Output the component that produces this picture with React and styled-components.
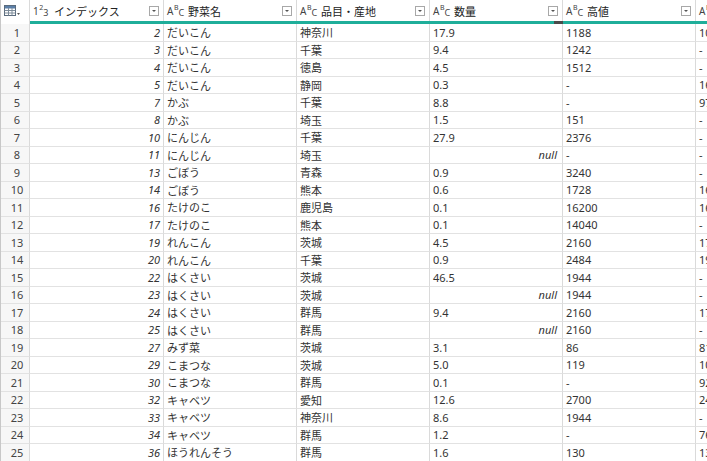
import React from 'react'
import styled, { createGlobalStyle } from 'styled-components'

const rows = [
  [2, 'だいこん', '神奈川', '17.9', '1188', '10'],
  [3, 'だいこん', '千葉', '9.4', '1242', '-'],
  [4, 'だいこん', '徳島', '4.5', '1512', '-'],
  [5, 'だいこん', '静岡', '0.3', '-', '16'],
  [7, 'かぶ', '千葉', '8.8', '-', '97'],
  [8, 'かぶ', '埼玉', '1.5', '151', '-'],
  [10, 'にんじん', '千葉', '27.9', '2376', '-'],
  [11, 'にんじん', '埼玉', null, '-', '-'],
  [13, 'ごぼう', '青森', '0.9', '3240', '-'],
  [14, 'ごぼう', '熊本', '0.6', '1728', '16'],
  [16, 'たけのこ', '鹿児島', '0.1', '16200', '16'],
  [17, 'たけのこ', '熊本', '0.1', '14040', '-'],
  [19, 'れんこん', '茨城', '4.5', '2160', '17'],
  [20, 'れんこん', '千葉', '0.9', '2484', '19'],
  [22, 'はくさい', '茨城', '46.5', '1944', '-'],
  [23, 'はくさい', '茨城', null, '1944', '-'],
  [24, 'はくさい', '群馬', '9.4', '2160', '17'],
  [25, 'はくさい', '群馬', null, '2160', '-'],
  [27, 'みず菜', '茨城', '3.1', '86', '81'],
  [29, 'こまつな', '茨城', '5.0', '119', '10'],
  [30, 'こまつな', '群馬', '0.1', '-', '92'],
  [32, 'キャベツ', '愛知', '12.6', '2700', '24'],
  [33, 'キャベツ', '神奈川', '8.6', '1944', '-'],
  [34, 'キャベツ', '群馬', '1.2', '-', '76'],
  [36, 'ほうれんそう', '群馬', '1.6', '130', '13'],
]

const columns = [
  { name: 'インデックス', type: 'num' },
  { name: '野菜名', type: 'text' },
  { name: '品目・産地', type: 'text' },
  { name: '数量', type: 'text', empty: 9 },
  { name: '高値', type: 'text' },
  { name: '', type: 'text' },
]

function App() {
  return (
    <>
      <Global />
      <Grid>
        <CornerCell>
          <svg width="17" height="11" viewBox="0 0 17 11">
            <rect x="0.5" y="0.5" width="11" height="10" fill="#fff" stroke="#5a6b7d" />
            <rect x="1" y="1" width="10" height="2.5" fill="#5b7fa8" />
            <line x1="0.5" y1="5.5" x2="11.5" y2="5.5" stroke="#7d8b99" />
            <line x1="0.5" y1="8" x2="11.5" y2="8" stroke="#7d8b99" />
            <line x1="4.5" y1="3" x2="4.5" y2="10.5" stroke="#7d8b99" />
            <line x1="8" y1="3" x2="8" y2="10.5" stroke="#7d8b99" />
            <path d="M13 8 L16 8 L14.5 10 Z" fill="#555" />
          </svg>
        </CornerCell>
        {columns.map((c, i) => (
          <HeaderCell key={i}>
            <HeaderTop>
              {c.type === 'num' ? (
                <TypeIcon>
                  1<Sup>2</Sup>
                  <Sub>3</Sub>
                </TypeIcon>
              ) : (
                <TypeIcon>
                  A<Sup>B</Sup>
                  <Sub>C</Sub>
                </TypeIcon>
              )}
              <ColName>{c.name}</ColName>
              {i < 5 && <DropBtn />}
            </HeaderTop>
            <QualityBar $empty={c.empty || 0} />
          </HeaderCell>
        ))}
        {rows.map((r, i) => (
          <React.Fragment key={i}>
            <RowNum>{i + 1}</RowNum>
            <Cell $align="right" $italic>{r[0]}</Cell>
            <Cell>{r[1]}</Cell>
            <Cell>{r[2]}</Cell>
            {r[3] === null ? (
              <Cell $align="right" $italic $pad="5px">null</Cell>
            ) : (
              <Cell>{r[3]}</Cell>
            )}
            <Cell>{r[4]}</Cell>
            <Cell>{r[5]}</Cell>
          </React.Fragment>
        ))}
      </Grid>
    </>
  )
}

export default App

//#region Styling
const Global = createGlobalStyle`
  body {
    margin: 0;
    background: #fff;
    overflow: hidden;
    font-family: "Noto Sans", "Noto Sans CJK JP", sans-serif;
    color: #333;
  }
`
const Grid = styled.div`
  display: grid;
  grid-template-columns: 29px 134px 133px 133px 133px 133px 133px;
  grid-auto-rows: 17.5px;
  grid-template-rows: 24px;
  width: 707px;
  height: 461px;
  overflow: hidden;
  border-left: 1px solid #c8c8c8;
  box-sizing: border-box;
`
const CornerCell = styled.div`
  display: flex;
  align-items: flex-start;
  padding: 5px 0 0 3px;
  border-right: 1px solid #dadada;
  background: #fff;
`
const HeaderCell = styled.div`
  display: flex;
  flex-direction: column;
  min-width: 0;
`
const HeaderTop = styled.div`
  height: 21px;
  display: flex;
  align-items: center;
  padding: 0 4px 0 3px;
  border-right: 1px solid #dadada;
  box-sizing: border-box;
  overflow: hidden;
`
const TypeIcon = styled.span`
  display: inline-flex;
  align-items: center;
  font-size: 10px;
  color: #444;
  width: 21px;
  flex: none;
  line-height: 1;
`
const Sup = styled.span`
  font-size: 7px;
  position: relative;
  top: -3px;
  margin-left: 0.5px;
`
const Sub = styled.span`
  font-size: 9px;
  position: relative;
  top: 2px;
`
const ColName = styled.span`
  flex: 1;
  font-size: 11px;
  white-space: nowrap;
  color: #222;
`
const DropBtn = styled.span`
  width: 10px;
  height: 10px;
  flex: none;
  border: 1px solid #a8a8a8;
  box-sizing: border-box;
  background: #fff;
  position: relative;
  &::after {
    content: '';
    position: absolute;
    left: 2px;
    top: 3px;
    border-left: 2px solid transparent;
    border-right: 2px solid transparent;
    border-top: 2px solid #555;
  }
`
const QualityBar = styled.div`
  height: 3px;
  background: linear-gradient(
    to left,
    #4a4a4a 0,
    #4a4a4a ${(p) => p.$empty}px,
    #1fae9a ${(p) => p.$empty}px
  );
`
const RowNum = styled.div`
  display: flex;
  align-items: center;
  justify-content: center;
  padding-left: 4px;
  font-size: 11px;
  color: #444;
  background: #f7f7f7;
  border-right: 1px solid #dadada;
  border-bottom: 1px solid #e2e2e2;
`
const Cell = styled.div`
  display: flex;
  align-items: center;
  justify-content: ${(p) => (p.$align === 'right' ? 'flex-end' : 'flex-start')};
  padding: 0 ${(p) => p.$pad || '3px'} 0 3px;
  font-size: 11px;
  font-style: ${(p) => (p.$italic ? 'italic' : 'normal')};
  white-space: nowrap;
  overflow: hidden;
  border-right: 1px solid #dadada;
  border-bottom: 1px solid #e2e2e2;
  color: #333;
`
//#endregion
